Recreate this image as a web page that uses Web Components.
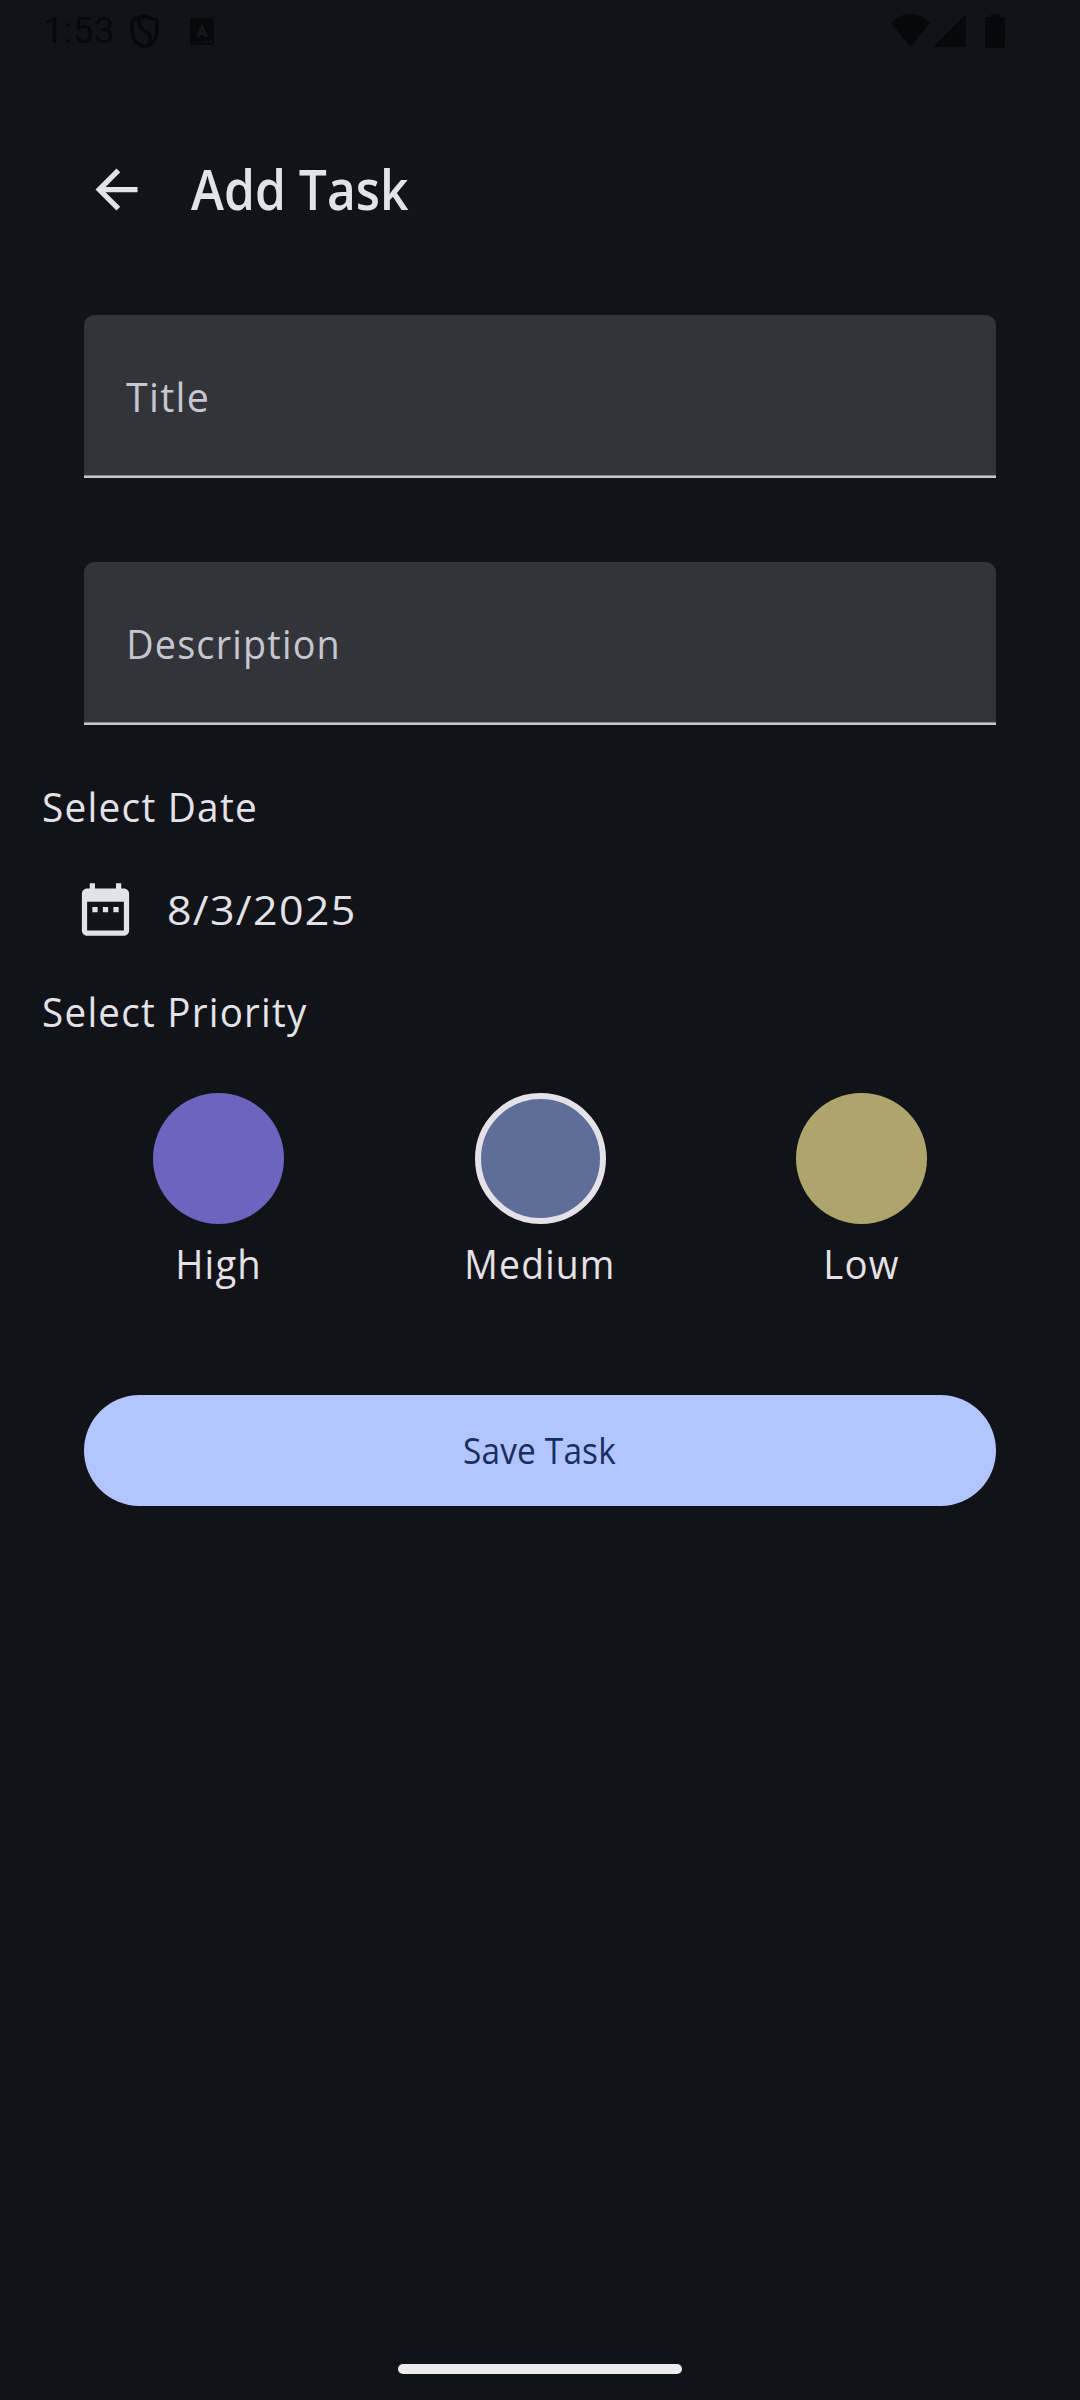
<!DOCTYPE html>
<html lang="en">
<head>
<meta charset="utf-8">
<title>Add Task</title>
<style>
html, body { margin: 0; padding: 0; background: #121318; }
body { width: 1080px; height: 2400px; overflow: hidden; font-family: "Open Sans", "Noto Sans", sans-serif; color: #e2e2e9; }
</style>
</head>
<body>
<task-screen></task-screen>
<script>
const define = (name, html, setup) => {
  const template = document.createElement('template');
  template.innerHTML = html;
  customElements.define(name, class extends HTMLElement {
    connectedCallback() {
      if (this.shadowRoot) return;
      this.attachShadow({ mode: 'open' }).append(template.content.cloneNode(true));
      if (setup) setup(this, this.shadowRoot);
    }
  });
};

// One line of text whose drawn glyphs span exactly the "span" attribute, in pixels.
define('fit-text', `
<style>
:host { display: block; height: 64px; flex: none; }
span { display: inline-block; line-height: 64px; white-space: pre; transform-origin: 0 0; }
</style><span></span>`, (host, root) => {
  const span = root.querySelector('span');
  const text = host.getAttribute('text');
  const size = +host.getAttribute('size') || 40.6;
  const weight = host.getAttribute('weight') || 400;
  const spacing = host.getAttribute('spacing') || '1.3';
  const family = host.getAttribute('family') || 'Open Sans';
  const target = +host.getAttribute('span');
  span.textContent = text;
  span.style.font = `${weight} ${size}px/64px "${family}", sans-serif`;
  span.style.letterSpacing = spacing + 'px';
  const ctx = document.createElement('canvas').getContext('2d');
  ctx.font = `${weight} ${size}px "${family}", sans-serif`;
  ctx.letterSpacing = spacing + 'px';
  const m = ctx.measureText(text);
  const left = -m.actualBoundingBoxLeft;
  const k = target / (m.actualBoundingBoxRight - left);
  host.style.width = target + 'px';
  span.style.transform = `translateX(${-left * k}px) scaleX(${k})`;
});

define('status-bar', `
<style>
:host { display: flex; height: 63px; box-sizing: border-box; padding: 0 75px 0 46px; justify-content: space-between; color: #07080b; }
div { display: flex; align-items: flex-start; }
svg { display: block; fill: currentColor; }
fit-text { margin-top: -1px; }
.shield { margin: 14px 0 0 17px; }
.app { margin: 18px 0 0 31px; }
.wifi { margin-top: 14px; }
.signal { margin: 14px 0 0 3px; }
.battery { margin: 14px 0 0 19px; }
</style>
<div>
<fit-text text="1:53" size="36.75" spacing="0" family="Roboto" span="67"></fit-text>
<svg class="shield" width="29" height="35" viewBox="0 0 29 35"><path d="M14.500 2 27 6.500V16C27 24.500 22 30.500 14.500 33 7 30.500 2 24.500 2 16V6.500Z" fill="none" stroke="currentColor" stroke-width="3.600" stroke-linejoin="round"/><path d="M10 4C8 10 9 13.500 14 16.500S22.500 22 19 30" fill="none" stroke="currentColor" stroke-width="3.400"/></svg>
<svg class="app" width="24" height="27" viewBox="0 0 24 27"><rect width="24" height="27" rx="2.500"/><path d="M7.500 19 12 8.500 16.500 19M9.500 15.500H14.500" fill="none" stroke="#15161b" stroke-width="3" stroke-linejoin="round"/><path d="M13 23h2v2h-2zM16.500 23h2v2h-2zM20 23h2v2h-2z" fill="#15161b"/></svg>
</div>
<div>
<svg class="wifi" width="39" height="33" viewBox="0 0 39 33"><path d="M0 9C11-3 28-3 39 9L19.500 33Z"/></svg>
<svg class="signal" width="33" height="33" viewBox="0 0 33 33"><path d="M33 0V33H0Z"/></svg>
<svg class="battery" width="20" height="34" viewBox="0 0 20 34"><path d="M6 0H14.500V3H18A2 2 0 0 1 20 5V32A2 2 0 0 1 18 34H2A2 2 0 0 1 0 32V5A2 2 0 0 1 2 3H6Z"/></svg>
</div>`);

define('top-bar', `
<style>
:host { display: flex; align-items: center; height: 168px; margin-top: 42px; padding-left: 85px; }
svg { width: 63px; height: 63px; fill: currentColor; margin-right: 43px; flex: none; }
</style>
<svg viewBox="0 0 24 24"><path d="M20 11H7.830l5.590-5.590L12 4l-8 8 8 8 1.410-1.410L7.830 13H20v-2z"/></svg>
<slot></slot>`);

define('text-field', `
<style>
:host { display: flex; align-items: center; box-sizing: border-box; height: 163px; margin: 42px 84px; padding-left: 42px; background: #333439; color: #c5c6d0; border-radius: 10.500px 10.500px 0 0; box-shadow: inset 0 -2px #c5c6d0, inset 0 -3px #85868e; }
</style><slot></slot>`);

define('date-row', `
<style>
:host { display: flex; align-items: center; height: 126px; margin-top: 7px; padding-left: 74px; }
svg { width: 63px; height: 63px; fill: currentColor; margin-right: 32px; flex: none; }
::slotted(fit-text) { margin-top: 2px; }
</style>
<svg viewBox="0 0 24 24"><path d="M9 11H7v2h2v-2zm4 0h-2v2h2v-2zm4 0h-2v2h2v-2zm2-7h-1V2h-2v2H8V2H6v2H5c-1.110 0-1.990.900-1.990 2L3 20c0 1.100.890 2 2 2h14c1.100 0 2-.900 2-2V6c0-1.100-.900-2-2-2zm0 16H5V9h14v11z"/></svg>
<slot></slot>`);

define('priority-option', `
<style>
:host { display: flex; flex-direction: column; align-items: center; width: 151px; gap: 8px; color: #e5e1e6; }
i { display: block; box-sizing: border-box; width: 131px; height: 131px; border-radius: 50%; background: var(--tone); }
:host([selected]) i { border: 6px solid #e4e1e9; }
</style><i></i><slot></slot>`);

define('save-button', `
<style>
:host { display: flex; align-items: center; justify-content: center; height: 111px; margin: 99px 84px 0; border-radius: 56px; background: #b3c5ff; color: #182e60; }
::slotted(fit-text) { margin-bottom: 2px; }
</style><slot></slot>`);

define('gesture-bar', `
<style>
:host { display: block; width: 284px; height: 10px; border-radius: 5px; background: #ececec; margin: auto auto 26px; }
</style>`);

define('task-screen', `
<style>
:host { display: flex; flex-direction: column; width: 1080px; height: 2400px; background: #121318; }
.label { margin-left: 43.500px; }
.date { margin-top: 8px; }
.priority { margin-top: 8px; }
.options { display: flex; justify-content: space-between; margin-top: 49px; padding: 0 143px; }
</style>
<status-bar></status-bar>
<top-bar><fit-text text="Add Task" size="56" weight="600" spacing="0" span="217.500" style="margin-bottom:2px"></fit-text></top-bar>
<text-field><fit-text text="Title" span="81"></fit-text></text-field>
<text-field><fit-text text="Description" span="208" style="margin-left:3px"></fit-text></text-field>
<fit-text class="label date" text="Select Date" span="211"></fit-text>
<date-row><fit-text text="8/3/2025" span="184"></fit-text></date-row>
<fit-text class="label priority" text="Select Priority" span="263"></fit-text>
<div class="options">
<priority-option style="--tone:#6d64c0"><fit-text text="High" span="80" style="margin-right:1px"></fit-text></priority-option>
<priority-option selected style="--tone:#5f6e99"><fit-text text="Medium" span="145" style="margin-right:2px"></fit-text></priority-option>
<priority-option style="--tone:#aea56d"><fit-text text="Low" span="72"></fit-text></priority-option>
</div>
<save-button><fit-text text="Save Task" size="35.6" spacing="0.2" span="152"></fit-text></save-button>
<gesture-bar></gesture-bar>`);
</script>
</body>
</html>
